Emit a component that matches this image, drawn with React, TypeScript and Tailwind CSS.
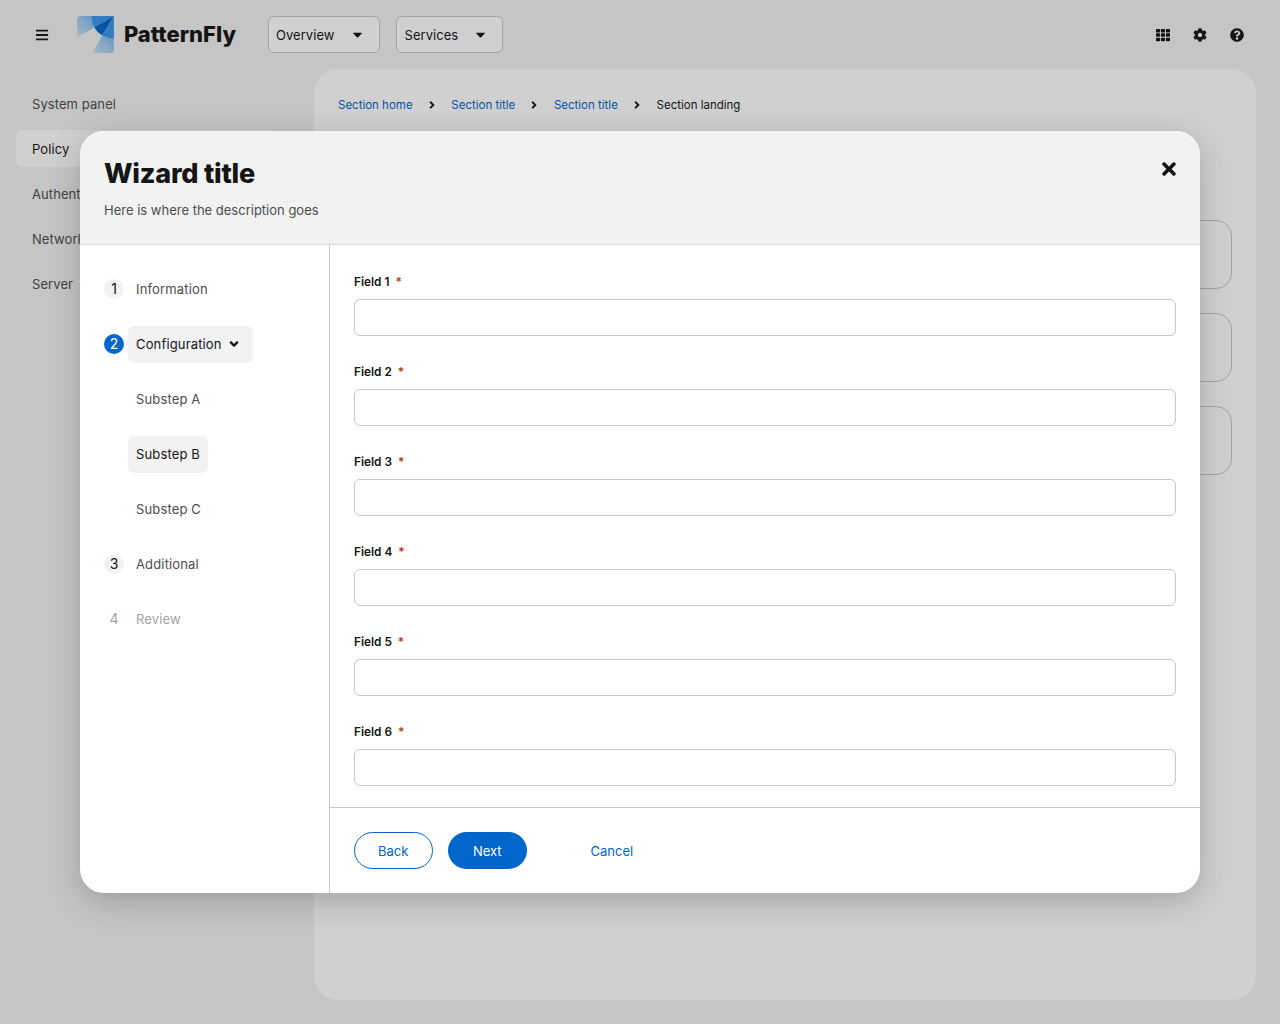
import type { ReactNode } from "react";
import { FaAngleDown, FaAngleRight, FaBars, FaCaretDown, FaCog, FaQuestionCircle, FaTh, FaTimes } from "react-icons/fa";

function Logo() {
  return (
    <svg className="h-[37px] w-[37px]" viewBox="0 0 37 37" aria-hidden="true">
      <defs>
        <linearGradient id="wing-left" x1="17" y1="2" x2="0" y2="18" gradientUnits="userSpaceOnUse">
          <stop offset="0" stopColor="#7db8ec" />
          <stop offset="1" stopColor="#cbdff0" />
        </linearGradient>
        <linearGradient id="wing-bottom" x1="36" y1="20" x2="18" y2="37" gradientUnits="userSpaceOnUse">
          <stop offset="0" stopColor="#7db8ec" />
          <stop offset="1" stopColor="#cbdff0" />
        </linearGradient>
      </defs>
      <path d="M4 0H14.3A22.7 22.7 0 0 0 17.3 11.5L0 21.6V4A4 4 0 0 1 4 0Z" fill="url(#wing-left)" />
      <path d="M25.3 19.5A22.7 22.7 0 0 0 37 22.7V33A4 4 0 0 1 33 37H15.3Z" fill="url(#wing-bottom)" />
      <path d="M14.3 0H37L17.3 11.5A22.7 22.7 0 0 1 14.3 0Z" fill="#3a97ec" />
      <path d="M37 0V22.7A22.7 22.7 0 0 1 25.3 19.5Z" fill="#3a97ec" />
      <path d="M37 0L25.3 19.5A22.7 22.7 0 0 1 17.3 11.5Z" fill="#0066cc" />
    </svg>
  );
}

function MenuToggle({ label, className }: { label: string; className: string }) {
  return (
    <button className={`flex h-[37px] items-center justify-between rounded-md border border-[#c7c7c7] bg-white pl-[7px] ${className}`}>
      <span className="pt-0.5 tracking-[0.05px]">{label}</span>
      <FaCaretDown className="size-[15px]" />
    </button>
  );
}

function Crumb({ children }: { children: ReactNode }) {
  return (
    <>
      <a className="text-[#0066cc]">{children}</a>
      <FaAngleRight className="mr-[13.5px] mb-px ml-[13.2px] size-[12px]" />
    </>
  );
}

function Step({ num, label, state = "default", expandable = false }: { num?: number; label: string; state?: "default" | "current" | "disabled"; expandable?: boolean }) {
  const badge =
    num === undefined
      ? ""
      : state === "current"
        ? "bg-[#0066cc] text-white"
        : state === "disabled"
          ? "text-[#a3a3a3]"
          : "bg-[#f2f2f2] text-[#151515]";
  const item =
    state === "current" ? "bg-[#f2f2f2] text-[#151515]" : state === "disabled" ? "text-[#a3a3a3]" : "text-[#4d4d4d]";
  return (
    <li className="flex h-[37px] items-center gap-1">
      <span className={`mb-px flex size-5 items-center justify-center rounded-full text-sm ${badge}`}>{num}</span>
      <span className={`flex h-[37px] items-center rounded-md px-2 tracking-[0.15px] ${item}`}>
        <span className="pt-px">{label}</span>
        {expandable && <FaAngleDown className="mr-[4px] mb-px ml-[5.5px] size-[14px]" />}
      </span>
    </li>
  );
}

function Field({ label }: { label: string }) {
  return (
    <div>
      <label className="flex h-[18px] items-center gap-[6px] text-[11.8px] font-semibold">
        {label}
        <span className="text-[11.8px] text-[#b1380b]">*</span>
      </label>
      <input className="mt-[7px] block h-[37px] w-full rounded-md border border-[#c7c7c7] bg-white px-2 outline-none" />
    </div>
  );
}

const navItems = ["System panel", "Policy", "Authentication", "Network services", "Server"];
const fields = ["Field 1", "Field 2", "Field 3", "Field 4", "Field 5", "Field 6"];

export default function App() {
  return (
    <div className="relative h-[1024px] w-[1280px] overflow-hidden bg-[#f2f2f2] font-['Inter',sans-serif] text-[13px] text-[#151515]">
      <div className="flex h-full flex-col">
        <header className="flex h-[69px] shrink-0 items-center pr-[35.6px] pl-[35.4px]">
          <FaBars className="size-[14px]" />
          <div className="ml-[27.6px] flex w-[159px] shrink-0 items-center gap-[10px]">
            <Logo />
            <span className="text-[22px] leading-[33px] font-extrabold">PatternFly</span>
          </div>
          <div className="ml-8 flex gap-4">
            <MenuToggle label="Overview" className="w-[112.5px] pr-[14.5px]" />
            <MenuToggle label="Services" className="w-[107px] pr-[14.5px]" />
          </div>
          <div className="ml-auto flex gap-[23px]">
            <FaTh className="size-[14px]" />
            <FaCog className="size-[14px]" />
            <FaQuestionCircle className="size-[14px]" />
          </div>
        </header>
        <div className="flex flex-1 pr-6 pb-6">
          <nav className="w-[314px] shrink-0 px-4 pt-4">
            <ul className="flex w-[258px] flex-col gap-2">
              {navItems.map((item) => (
                <li
                  key={item}
                  className={`flex h-[37px] items-center rounded-md px-4 pt-0.5 tracking-[0.08px] ${item === "Policy" ? "bg-white" : "text-[#4d4d4d]"}`}
                >
                  {item}
                </li>
              ))}
            </ul>
          </nav>
          <main className="flex-1 rounded-3xl bg-white p-6">
            <div className="flex h-6 items-center pt-px text-[11.5px]">
              <Crumb>Section home</Crumb>
              <Crumb>Section title</Crumb>
              <Crumb>Section title</Crumb>
              <span>Section landing</span>
            </div>
            <div className="mt-[102.5px] flex flex-col gap-6">
              <div className="h-[69px] rounded-2xl border border-[#c7c7c7]" />
              <div className="h-[69px] rounded-2xl border border-[#c7c7c7]" />
              <div className="h-[69px] rounded-2xl border border-[#c7c7c7]" />
            </div>
          </main>
        </div>
      </div>

      <div className="absolute inset-0 bg-[#151515]/20 px-20 pt-[131px]">
        <section className="flex h-[762px] flex-col overflow-hidden rounded-3xl bg-white shadow-[0_8px_30px_rgba(41,41,41,0.25)]">
          <header className="flex h-[114px] shrink-0 justify-between border-b border-[#d8d8d8] bg-[#f2f2f2] px-6">
            <div className="pt-[26px]">
              <h1 className="text-[27px] leading-[34px] font-extrabold tracking-[-0.23px]">Wizard title</h1>
              <p className="mt-[9px] leading-5 text-[#4d4d4d]">Here is where the description goes</p>
            </div>
            <FaTimes className="mt-[28px] -mr-[3px] size-5" />
          </header>
          <div className="flex min-h-0 flex-1">
            <nav className="w-[250px] shrink-0 border-r border-[#c7c7c7] px-6 pt-[25.5px]">
              <ol className="flex flex-col gap-[18px]">
                <Step num={1} label="Information" />
                <Step num={2} label="Configuration" state="current" expandable />
                <Step label="Substep A" />
                <Step label="Substep B" state="current" />
                <Step label="Substep C" />
                <Step num={3} label="Additional" />
                <Step num={4} label="Review" state="disabled" />
              </ol>
            </nav>
            <div className="flex flex-1 flex-col">
              <form className="flex flex-1 flex-col gap-[28px] px-6 pt-[29px]">
                {fields.map((label) => (
                  <Field key={label} label={label} />
                ))}
              </form>
              <footer className="flex h-[86px] shrink-0 items-center border-t border-[#c7c7c7] px-6">
                <button className="h-[37px] w-[78.5px] rounded-full border border-[#0066cc] pt-0.5 text-[#0066cc]">Back</button>
                <button className="ml-[15.5px] h-[37px] w-[78.5px] rounded-full bg-[#0066cc] pt-0.5 text-white">Next</button>
                <button className="ml-[64px] pt-0.5 text-[#0066cc]">Cancel</button>
              </footer>
            </div>
          </div>
        </section>
      </div>
    </div>
  );
}
